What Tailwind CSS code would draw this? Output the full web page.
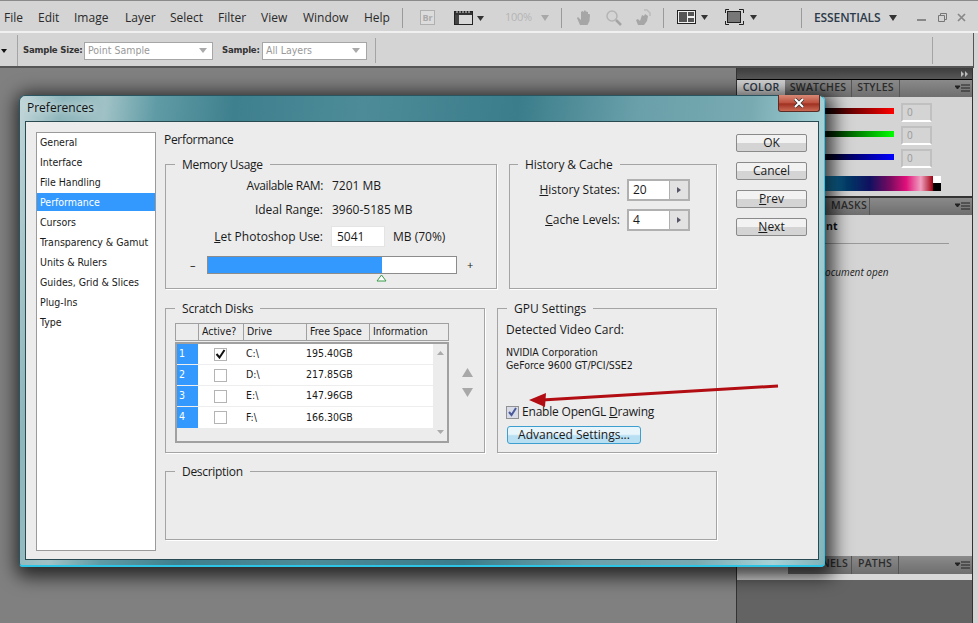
<!DOCTYPE html>
<html lang="en">
<head>
<meta charset="UTF-8">
<title>Preferences</title>
<script src="https://cdn.jsdelivr.net/npm/@tailwindcss/browser@4"></script>
</head>
<body class="relative w-[978px] h-[623px] overflow-hidden bg-[#d4d4d4] font-['Open_Sans',sans-serif] text-[12px] text-[#1a1a1a]">

<!-- Menu bar -->
<div class="h-[33px] pt-[3px] border-t border-[#8a8a8a] border-b-2 border-b-[#f0f0f0] flex items-center pl-[4px] text-[#2a2a2a]">
  <div class="flex items-center gap-[16px] w-[397px]">
    <span class="w-[18px]">File</span><span class="w-[20px]">Edit</span><span class="w-[35px]">Image</span><span class="w-[29px]">Layer</span><span class="w-[32px]">Select</span><span class="w-[27px]">Filter</span><span class="w-[26px]">View</span><span class="w-[45px]">Window</span><span>Help</span>
  </div>
  <div class="w-px h-[20px] bg-[#9a9a9a] ml-[1px]"></div>
  <div class="ml-[17px] w-[15px] h-[15px] border border-[#b0b0b0] bg-[#dcdcdc] text-[9px] font-bold text-[#aaa] flex items-center justify-center">Br</div>
  <svg class="ml-[19px]" width="32" height="16" viewBox="0 0 32 16"><rect x=".5" y="1.5" width="18" height="13" fill="#d8d8d8" stroke="#222"/><rect x="1" y="2" width="17" height="3" fill="#333"/><path d="M3 1v2M6 1v2M9 1v2M12 1v2M15 1v2" stroke="#ddd"/><rect x="1" y="5" width="4" height="9" fill="#444"/><path d="M23 6h7l-3.500 5z" fill="#333"/></svg>
  <span class="ml-[19px] w-[28px] text-[#b4b4b4] text-[11px] tracking-[-.3px]">100%</span>
  <svg class="ml-[8px]" width="9" height="6"><path d="M0 0h8l-4 6z" fill="#a8a8a8"/></svg>
  <div class="ml-[11px] w-px h-[20px] bg-[#9a9a9a]"></div>
  <svg class="ml-[14px]" width="17" height="17" viewBox="0 0 17 17"><path d="M4 16 1 9l1-1 3 3V3l1.500-1L8 3V1.500h1.500L10 3v-.5l2 .5v2l1.500 0L14 6l-.5 6-2 4z" fill="#a6a6a6"/></svg>
  <svg class="ml-[12px]" width="17" height="17" viewBox="0 0 17 17"><circle cx="7" cy="7" r="5" fill="none" stroke="#b4b4b4" stroke-width="1.500"/><path d="m11 11 5 5" stroke="#a4a4a4" stroke-width="2.500"/></svg>
  <svg class="ml-[13px]" width="17" height="17" viewBox="0 0 17 17"><path d="M3 16 1 11l2-1 2 2 2-6 2 1 1-2 3 2-1 5-3 4z" fill="#a6a6a6"/><path d="M9 1h3l3 3v3" fill="none" stroke="#bbb" stroke-width="1.500"/></svg>
  <div class="ml-[11px] w-px h-[20px] bg-[#9a9a9a]"></div>
  <svg class="ml-[13px]" width="32" height="15" viewBox="0 0 32 15"><rect x=".5" y=".5" width="18" height="13" fill="#f0f0f0" stroke="#222"/><rect x="2" y="2" width="8" height="10" fill="#555"/><rect x="11" y="2" width="6" height="4" fill="#555"/><rect x="11" y="8" width="6" height="4" fill="#555"/><path d="M24 5h7l-3.500 5z" fill="#333"/></svg>
  <svg class="ml-[16px]" width="33" height="17" viewBox="0 0 33 17"><path d="M.5 4V.5H4M14 .5h4.500V4M.5 12v3.500H4M14 15.500h4.500V12" fill="none" stroke="#222"/><rect x="2.500" y="2.500" width="13" height="11" fill="#777" stroke="#222"/><path d="M25 6h7l-3.500 5z" fill="#333"/></svg>
  <div class="ml-[43px] w-px h-[20px] bg-[#9a9a9a]"></div>
  <span class="ml-[12px] font-semibold text-[#2d3a4a] tracking-[-.1px]">ESSENTIALS</span>
  <svg class="ml-[9px]" width="8" height="6"><path d="M0 0h8l-4 6z" fill="#333"/></svg>
  <svg class="ml-[20px]" width="50" height="12" viewBox="0 0 50 12"><path d="M0 8h9" stroke="#888" stroke-width="2"/><path d="M21.500 3.500h6v6h-6zM23.500 3V1.500h6v6H28" fill="none" stroke="#777"/><path d="m41 2 7 7m0-7-7 7" stroke="#888" stroke-width="1.700"/></svg>
</div>

<!-- Options bar -->
<div class="h-[35px] pt-[2px] mr-[4px] border-r border-b-2 border-r-[#555] border-b-[#555] flex items-center font-['DejaVu_Sans_Condensed','DejaVu_Sans',sans-serif]">
  <svg class="ml-[1px]" width="6" height="4"><path d="M0 0h6l-3 4z" fill="#111"/></svg>
  <div class="ml-[10px] w-px h-[31px] bg-[#a4a4a4]"></div>
  <span class="ml-[5px] w-[61px] whitespace-nowrap text-[9.500px] font-bold text-[#333] tracking-[-.2px]">Sample Size:</span>
  <div class="w-[129px] h-[18px] border border-[#a6a6a6] bg-white flex items-center pl-[3px] text-[10.500px] text-[#999]"><span class="w-[111px]">Point Sample</span><svg width="8" height="5"><path d="M0 0h8l-4 5z" fill="#aaa"/></svg></div>
  <span class="ml-[9px] w-[38px] whitespace-nowrap text-[9.500px] font-bold text-[#333] tracking-[-.2px]">Sample:</span>
  <div class="ml-[2px] w-[105px] h-[18px] border border-[#a6a6a6] bg-white flex items-center pl-[3px] text-[10.500px] text-[#999]"><span class="w-[86px]">All Layers</span><svg width="8" height="5"><path d="M0 0h8l-4 5z" fill="#aaa"/></svg></div>
  <div class="ml-[8px] w-px h-[25px] bg-[#a4a4a4]"></div>
  <div class="ml-[556px] w-px h-[27px] bg-[#a4a4a4]"></div>
</div>

<!-- Workspace + panels -->
<div class="flex h-[555px]">
  <div class="w-[736px] bg-[#808080]"></div>
  <div class="w-[237px] border-l border-r border-[#333] bg-[#d4d4d4] flex flex-col font-semibold">
    <div class="h-[12px] bg-[linear-gradient(#3d3d3d,#575757)] border-b border-black flex items-center justify-end pr-[3px]">
      <svg width="8" height="6"><path d="M0 0l3 3-3 3zM4 0l3 3-3 3z" fill="#bbb"/></svg>
    </div>
    <div class="h-[17px] bg-[linear-gradient(#8a8a8a,#6e6e6e)] flex text-[10.500px] tracking-[.2px] text-[#2c2c2c]">
      <div class="w-[48px] bg-[#d4d4d4] text-center text-[#2d3a4a]">COLOR</div>
      <div class="w-[67px] border-r border-[#555] text-center">SWATCHES</div>
      <div class="w-[48px] border-r border-[#555] text-center">STYLES</div>
      <div class="flex-1 flex justify-end items-center pr-[2px]"><svg width="15" height="9"><path d="M0 2h5L2.500 5zM6 1h9M6 4h9M6 7h9" stroke="#222" fill="#222"/></svg></div>
    </div>
    <div class="h-[99px] flex flex-col pl-[84px] pt-[6px] gap-[9px] font-normal text-[#999]">
      <div class="flex items-start gap-[7px] h-[19px]"><div class="w-[73px] h-[6px] mt-[5px] bg-[linear-gradient(to_right,#000,#f00)]"></div><div class="w-[31px] h-[19px] border-2 border-[#c0c0c0] border-b-white pl-[4px] text-[10px] leading-[15px]">0</div></div>
      <div class="flex items-start gap-[7px] h-[19px] -mt-[5px]"><div class="w-[73px] h-[6px] mt-[5px] bg-[linear-gradient(to_right,#000,#0f0)]"></div><div class="w-[31px] h-[19px] border-2 border-[#c0c0c0] border-b-white pl-[4px] text-[10px] leading-[15px]">0</div></div>
      <div class="flex items-start gap-[7px] h-[19px] -mt-[5px]"><div class="w-[73px] h-[6px] mt-[5px] bg-[linear-gradient(to_right,#000,#00f)]"></div><div class="w-[31px] h-[19px] border-2 border-[#c0c0c0] border-b-white pl-[4px] text-[10px] leading-[15px]">0</div></div>
      <div class="flex -mt-[1px] -ml-[10px] h-[15px]">
        <div class="w-[122px] bg-[linear-gradient(to_right,#29b6e8,#003a66_30%,#101060_48%,#7a0a60_65%,#e0107a_78%,#f0a0c0_90%,#a00010)]"></div>
        <div class="w-[8px] bg-[linear-gradient(#fff_50%,#000_50%)]"></div>
      </div>
    </div>
    <div class="h-[2px] bg-[#333]"></div>
    <div class="h-[17px] bg-[linear-gradient(#8a8a8a,#6e6e6e)] flex text-[10.500px] tracking-[.2px] text-[#2c2c2c]">
      <div class="ml-[92px] w-[41px] border-r border-[#555] text-center">MASKS</div>
      <div class="flex-1 flex justify-end items-center pr-[2px]"><svg width="15" height="9"><path d="M0 2h5L2.500 5zM6 1h9M6 4h9M6 7h9" stroke="#222" fill="#222"/></svg></div>
    </div>
    <div class="h-[341px] pl-[89px] pt-[4px] font-normal">
      <div class="font-bold text-[10.500px] text-[#111]">nt</div>
      <div class="-ml-[89px] mt-[8px] w-[212px] h-px bg-[#999]"></div>
      <div class="mt-[21px] italic text-[10px] text-[#222] -ml-[1px]">ocument open</div>
    </div>
    <div class="h-[18px] bg-[linear-gradient(#8a8a8a,#6e6e6e)] flex text-[10.500px] tracking-[.2px] text-[#2c2c2c]">
      <div class="w-[51px] bg-[#d4d4d4] text-center">LAYERS</div>
      <div class="w-[64px] border-r border-[#555] text-center">CHANNELS</div>
      <div class="w-[47px] border-r border-[#555] text-center">PATHS</div>
      <div class="flex-1 flex justify-end items-center pr-[2px]"><svg width="15" height="9"><path d="M0 2h5L2.500 5zM6 1h9M6 4h9M6 7h9" stroke="#222" fill="#222"/></svg></div>
    </div>
    <div class="h-[6px] bg-[#d8d8d8]"></div>
    <div class="flex-1 bg-[#636363]"></div>
  </div>
</div>

<!-- Preferences dialog -->
<div class="absolute left-[19px] top-[95px] w-[806px] h-[472px] rounded-t-[6px] rounded-b-[4px] border border-[#2a5560] border-r-[#2ec4e6] border-b-2 border-b-[#2ec4e6] pl-[5px] pr-[5px] pb-[5px] flex flex-col shadow-[3px_4px_18px_6px_rgba(0,0,0,0.7)] bg-[linear-gradient(97deg,#c2d6d9_0%,#8db6bb_5%,#a0c2c6_10%,#5f9ba5_16%,#3f808e_25%,#4d8b98_40%,#3b7d8b_58%,#6aa0aa_72%,#78aab2_85%,#a6d2d7_94%,#7fb3ba_100%)]">
  <div class="h-[25px] shrink-0 flex justify-between">
    <span class="pl-[2px] pt-[3px] text-[12px] text-[#111] [text-shadow:0_0_8px_#fff]">Preferences</span>
    <div class="-mt-px -mr-px w-[42px] h-[17px] rounded-b-[3px] border border-t-0 border-[#5b2b25] bg-[linear-gradient(#d98a76,#bb4f3c_50%,#a03020_55%,#c96a55)] flex items-center justify-center">
      <svg width="12" height="10" viewBox="0 0 12 10"><path d="m2 1 8 8m0-8-8 8" stroke="#333" stroke-width="3.400"/><path d="m2 1 8 8m0-8-8 8" stroke="#fff" stroke-width="2"/></svg>
    </div>
  </div>
  <div class="flex-1 border border-[#2a4a52] bg-[#ececec] pl-[10px] pt-[10px] flex">
    <!-- category list -->
    <div class="w-[120px] h-[419px] border border-[#9a9a9a] bg-white text-[10.500px] flex flex-col font-['DejaVu_Sans_Condensed','DejaVu_Sans',sans-serif]">
      <div class="h-[20px] pl-[3px] leading-[18px]">General</div>
      <div class="h-[20px] pl-[3px] leading-[18px]">Interface</div>
      <div class="h-[20px] pl-[3px] leading-[18px]">File Handling</div>
      <div class="h-[18px] mb-[2px] pl-[3px] leading-[18px] bg-[#3399ff] text-white">Performance</div>
      <div class="h-[20px] pl-[3px] leading-[18px]">Cursors</div>
      <div class="h-[20px] pl-[3px] leading-[18px]">Transparency &amp; Gamut</div>
      <div class="h-[20px] pl-[3px] leading-[18px]">Units &amp; Rulers</div>
      <div class="h-[20px] pl-[3px] leading-[18px]">Guides, Grid &amp; Slices</div>
      <div class="h-[20px] pl-[3px] leading-[18px]">Plug-Ins</div>
      <div class="h-[20px] pl-[3px] leading-[18px]">Type</div>
    </div>

    <!-- main column -->
    <div class="ml-[9px] w-[553px] flex flex-col">
      <div class="h-[24px] -mt-[2px] ml-[-1px] leading-[20px] tracking-[-.3px]">Performance</div>
      <div class="flex gap-[12px]">
        <fieldset class="w-[332px] h-[135px] border border-[#a4a4a4] rounded-none pl-[16px] shadow-[1px_1px_0_#fff]">
          <legend class="-ml-[7px] px-[7px] pt-[2px] tracking-[-.3px]">Memory Usage</legend>
          <div class="flex h-[20px] mt-[2px] items-center"><span class="w-[141px] text-right tracking-[-.4px]">Available RAM:</span><span class="ml-[9px]">7201 MB</span></div>
          <div class="flex h-[20px] mt-[4px] items-center"><span class="w-[141px] text-right">Ideal Range:</span><span class="ml-[9px]">3960-5185 MB</span></div>
          <div class="flex h-[21px] mt-[6px] items-center"><span class="w-[141px] text-right"><u>L</u>et Photoshop Use:</span><div class="ml-[8px] w-[54px] h-[21px] bg-white border border-[#e4e4e4] pl-[5px] leading-[19px]">5041</div><span class="ml-[8px]">MB (70%)</span></div>
          <div class="flex items-center mt-[9px] -ml-[16px]">
            <span class="w-[41px] pl-[24px] text-[11px] leading-[18px]">–</span>
            <div class="w-[250px] h-[18px] border border-[#8c8c8c] bg-white"><div class="w-[174px] h-full bg-[#3399ff]"></div></div>
            <span class="pl-[10px] text-[11px]">+</span>
          </div>
          <svg class="ml-[194px]" width="11" height="8" viewBox="0 0 11 8"><path d="M5.500 1 10 7H1z" fill="#fff" stroke="#3a9a4a"/></svg>
        </fieldset>
        <fieldset class="w-[208px] h-[135px] border border-[#a4a4a4] rounded-none shadow-[1px_1px_0_#fff]">
          <legend class="ml-[8px] px-[7px] pt-[2px] tracking-[-.1px]">History &amp; Cache</legend>
          <div class="flex mt-[5px] items-center"><span class="w-[110px] text-right"><u>H</u>istory States:</span>
            <div class="ml-[7px] w-[63px] h-[22px] border-2 border-[#b0b0b0] bg-white flex pl-[4px] leading-[18px]"><span class="flex-1">20</span><div class="w-[19px] bg-[#e2e2e2] border-l border-[#b0b0b0] flex items-center justify-center"><svg width="4" height="6"><path d="M0 0l4 3-4 3z" fill="#556"/></svg></div></div>
          </div>
          <div class="flex mt-[8px] items-center"><span class="w-[110px] text-right"><u>C</u>ache Levels:</span>
            <div class="ml-[7px] w-[63px] h-[22px] border-2 border-[#b0b0b0] bg-white flex pl-[4px] leading-[18px]"><span class="flex-1">4</span><div class="w-[19px] bg-[#e2e2e2] border-l border-[#b0b0b0] flex items-center justify-center"><svg width="4" height="6"><path d="M0 0l4 3-4 3z" fill="#556"/></svg></div></div>
          </div>
        </fieldset>
      </div>

      <div class="flex gap-[12px] mt-[9px]">
        <fieldset class="w-[320px] h-[155px] border border-[#a4a4a4] rounded-none pl-[9px] pt-[5px] shadow-[1px_1px_0_#fff]">
          <legend class="px-[7px] pt-[2px] tracking-[-.2px]">Scratch Disks</legend>
          <div class="flex items-center">
            <div class="w-[274px] text-[10.500px] font-['DejaVu_Sans_Condensed','DejaVu_Sans',sans-serif]">
              <div class="grid grid-cols-[23px_45px_63px_63px_80px] h-[18px] border border-[#a0a0a0] leading-[15px] bg-[#ececec]">
                <div class="border-r border-[#a0a0a0]"></div>
                <div class="border-r border-[#a0a0a0] pl-[3px]">Active?</div>
                <div class="border-r border-[#a0a0a0] pl-[3px]">Drive</div>
                <div class="border-r border-[#a0a0a0] pl-[3px]">Free Space</div>
                <div class="pl-[3px]">Information</div>
              </div>
              <div class="flex h-[101px] mt-px border-2 border-[#a0a0a0]">
                <div class="w-[256px] flex flex-col">
                  <div class="grid grid-cols-[21px_45px_63px_1fr] h-[21px] bg-white border-b border-[#eee] items-center"><div class="h-full bg-[#3399ff] text-white pl-[2px] leading-[19px]">1</div><div class="flex justify-center"><div class="w-[13px] h-[13px] border border-[#b4b4b4] bg-white flex items-center justify-center"><svg width="11" height="10" viewBox="0 0 11 10"><path d="m1.500 5 3 3.500L9.500 1" fill="none" stroke="#111" stroke-width="2"/></svg></div></div><div class="pl-[3px]">C:\</div><div>195.40GB</div></div>
                  <div class="grid grid-cols-[21px_45px_63px_1fr] h-[21px] bg-white border-b border-[#eee] items-center"><div class="h-full bg-[#3399ff] text-white pl-[2px] leading-[19px]">2</div><div class="flex justify-center"><div class="w-[13px] h-[13px] border border-[#b4b4b4] bg-white"></div></div><div class="pl-[3px]">D:\</div><div>217.85GB</div></div>
                  <div class="grid grid-cols-[21px_45px_63px_1fr] h-[21px] bg-white border-b border-[#eee] items-center"><div class="h-full bg-[#3399ff] text-white pl-[2px] leading-[19px]">3</div><div class="flex justify-center"><div class="w-[13px] h-[13px] border border-[#b4b4b4] bg-white"></div></div><div class="pl-[3px]">E:\</div><div>147.96GB</div></div>
                  <div class="grid grid-cols-[21px_45px_63px_1fr] h-[21px] bg-white items-center"><div class="h-full bg-[#3399ff] text-white pl-[2px] leading-[19px]">4</div><div class="flex justify-center"><div class="w-[13px] h-[13px] border border-[#b4b4b4] bg-white"></div></div><div class="pl-[3px]">F:\</div><div>166.30GB</div></div>
                </div>
                <div class="flex-1 flex flex-col justify-between items-center py-[7px] pl-[1px]">
                  <svg width="7" height="4"><path d="M3.500 0 7 4H0z" fill="#aaa"/></svg>
                  <svg width="7" height="4"><path d="M0 0h7L3.500 4z" fill="#aaa"/></svg>
                </div>
              </div>
            </div>
            <div class="ml-[13px] -mt-[1px] flex flex-col gap-[11px]">
              <svg width="11" height="9"><path d="M5.500 0 11 9H0z" fill="#a8a8a8"/></svg>
              <svg width="11" height="9"><path d="M0 0h11L5.500 9z" fill="#a8a8a8"/></svg>
            </div>
          </div>
        </fieldset>
        <fieldset class="w-[220px] h-[155px] border border-[#a4a4a4] rounded-none pl-[8px] shadow-[1px_1px_0_#fff]">
          <legend class="ml-[1px] px-[7px] pt-[2px]">GPU Settings</legend>
          <div class="mt-[3px] leading-[18px]">Detected Video Card:</div>
          <div class="mt-[7px] text-[10.500px] leading-[13px] font-['DejaVu_Sans_Condensed','DejaVu_Sans',sans-serif]">NVIDIA Corporation<br>GeForce 9600 GT/PCI/SSE2</div>
          <div class="mt-[32px] flex items-center h-[16px]">
            <div class="w-[13px] h-[13px] border border-[#909090] bg-[#d8dce8] flex items-center justify-center"><svg width="11" height="10" viewBox="0 0 11 10"><path d="m2 5 2.500 3L9 1" fill="none" stroke="#4a5a9a" stroke-width="2"/></svg></div>
            <span class="ml-[3px] tracking-[-.2px]">Enable OpenGL <u>D</u>rawing</span>
          </div>
          <div class="mt-[6px] ml-[1px] w-[134px] h-[18px] rounded-[3px] border border-[#3c9fd0] bg-[linear-gradient(#e8f5fb_45%,#b8dff2_55%)] text-center leading-[15px]">Advanced Settings...</div>
        </fieldset>
      </div>

      <fieldset class="mt-[8px] w-[552px] h-[79px] border border-[#a4a4a4] rounded-none shadow-[1px_1px_0_#fff]">
        <legend class="ml-[9px] px-[7px] pt-[2px] tracking-[-.3px]">Description</legend>
      </fieldset>
    </div>

    <!-- dialog buttons -->
    <div class="ml-[18px] pt-[2px] flex flex-col gap-[10px]">
      <div class="w-[71px] h-[18px] rounded-[2px] border border-[#8a8a8a] bg-[linear-gradient(#f2f2f2_50%,#d4d4d4_50%)] text-center leading-[15px]">OK</div>
      <div class="w-[71px] h-[18px] rounded-[2px] border border-[#8a8a8a] bg-[linear-gradient(#f2f2f2_50%,#d4d4d4_50%)] text-center leading-[15px]">Cancel</div>
      <div class="w-[71px] h-[18px] rounded-[2px] border border-[#8a8a8a] bg-[linear-gradient(#f2f2f2_50%,#d4d4d4_50%)] text-center leading-[15px]"><u>P</u>rev</div>
      <div class="w-[71px] h-[18px] rounded-[2px] border border-[#8a8a8a] bg-[linear-gradient(#f2f2f2_50%,#d4d4d4_50%)] text-center leading-[15px]"><u>N</u>ext</div>
    </div>
  </div>
</div>

<!-- annotation arrow -->
<svg class="absolute left-[520px] top-[378px]" width="265" height="34" viewBox="0 0 265 34">
  <path d="M258 8 22 22" stroke="#b20d12" stroke-width="3"/>
  <path d="M9 22 26 15l-1 14z" fill="#b20d12"/>
</svg>
</body>
</html>
